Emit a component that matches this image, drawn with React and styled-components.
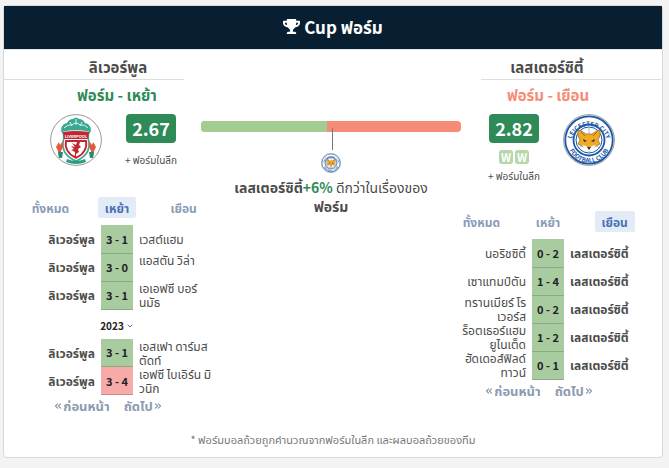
import React from 'react';
import styled, {createGlobalStyle} from 'styled-components';
import {FaTrophy} from 'react-icons/fa';
import {ChevronDown, ChevronsLeft, ChevronsRight} from 'lucide-react';

const GlobalStyle = createGlobalStyle`
  * {
    box-sizing: border-box;
  }

  body {
    margin: 0;
    background: #f3f3f3;
    color: #4c4c4c;
    font-family: 'Noto Sans CJK SC', 'Noto Sans Thai', Tahoma, Loma, sans-serif;
    font-size: 12px;
    line-height: 14px;
  }

  button {
    border: 0;
    padding: 0;
    background: none;
    color: inherit;
    font: inherit;
    cursor: pointer;
  }
`;

const Card = styled.section`
  margin: 5px 6px 12px 3px;
  background: #fff;
  border: 1px solid #d6d9d9;
  border-radius: 4px;
`;

const Header = styled.h2`
  display: flex;
  align-items: center;
  justify-content: center;
  gap: 4px;
  height: 43px;
  margin: 0;
  padding-bottom: 2px;
  background: #081e31;
  color: #fff;
  font-size: 17px;
  font-weight: 700;
`;

const Columns = styled.div`
  display: grid;
  grid-template-columns: 180px 1fr 180px;
  padding-right: 1px;
  border-top: 1px solid #e4e8ea;
`;

const Side = styled.div`
  min-width: 0;
`;

const TeamTitle = styled.h3`
  margin: 0;
  height: 30px;
  padding: ${(p) => (p.$away ? '0 48px 0 0' : '0 0 0 48px')};
  border-bottom: 1px solid #ddd;
  font-size: 15px;
  font-weight: 700;
  line-height: 34px;
  text-align: center;
`;

const SideBody = styled.div`
  width: 200px;
  margin-left: ${(p) => (p.$away ? '-33px' : '13px')};
`;

const FormTitle = styled.div`
  height: 34px;
  color: ${(p) => (p.$away ? '#f58c78' : '#2e8b57')};
  font-size: 15px;
  font-weight: 700;
  line-height: 30px;
  text-align: center;
`;

const Summary = styled.div`
  display: flex;
  flex-direction: ${(p) => (p.$away ? 'row-reverse' : 'row')};
  justify-content: center;
  gap: 22px;
  min-height: 55px;
  padding: ${(p) => (p.$away ? '0 0 0 6px' : '0 6px 0 0')};
`;

const Rating = styled.div`
  display: flex;
  flex-direction: column;
  align-items: center;
  width: 54px;
`;

const Badge = styled.strong`
  width: 50px;
  border-radius: 4px;
  background: #2e8b57;
  color: #fff;
  font-size: 18px;
  line-height: 29px;
  text-align: center;
`;

const Results = styled.div`
  display: flex;
  gap: 2px;
  margin-top: 7px;
`;

const Result = styled.span`
  width: 14px;
  border-radius: 3px;
  background: #b5d8a8;
  color: #fff;
  font-size: 11px;
  font-weight: 700;
  line-height: 14px;
  text-align: center;
`;

const LeagueForm = styled.button`
  && {
    margin-top: ${(p) => (p.$away ? '5px' : '10px')};
    font-size: 10px;
    white-space: nowrap;
  }
`;

const Tabs = styled.div`
  display: grid;
  grid-template-columns: repeat(3, 1fr);
  justify-items: center;
  margin-top: 28px;
`;

const Tab = styled.button`
  && {
    padding: 0 7px;
    border-radius: 2px;
    background: ${(p) => (p.$active ? '#e3ecf6' : 'none')};
    color: ${(p) => (p.$active ? '#4a70b5' : '#8a9bb8')};
    font-weight: 700;
    line-height: 21px;
  }
`;

const Matches = styled.table`
  width: 100%;
  table-layout: fixed;
  border-collapse: collapse;
  margin-top: ${(p) => p.$top}px;
`;

const Team = styled.td`
  height: 28px;
  padding: 0 6px;
  font-weight: ${(p) => (p.$bold ? 700 : 400)};
  text-align: ${(p) => p.$align};
  vertical-align: middle;
  white-space: pre;
`;

const ScoreCol = styled.col`
  width: 32px;
`;

const Score = styled.td`
  padding: 0;
  border-bottom: 1px solid ${(p) => (p.$lost ? '#cf8a88' : '#8bab84')};
  background: ${(p) => (p.$lost ? '#f7aaa8' : '#a8cb9f')};
  color: #222;
  font-size: 11px;
  font-weight: 700;
  text-align: center;
`;

const Season = styled.button`
  && {
    display: flex;
    align-items: center;
    gap: 2px;
    margin: 9px auto 0;
    color: #222;
    font-size: 10px;
    font-weight: 700;
  }
`;

const Pager = styled.nav`
  display: flex;
  justify-content: center;
  gap: 14px;
  margin: 3px 18px 0 0;

  button {
    display: flex;
    align-items: center;
    color: #8a9bb0;
    font-size: 13px;
    font-weight: 700;
    line-height: 16px;
  }
`;

const Middle = styled.div`
  display: flex;
  flex-direction: column;
  align-items: center;
  padding: 71px 20px 0 17px;
`;

const Bar = styled.div`
  display: flex;
  width: 100%;
  height: 11px;
  border-radius: 4px;
  overflow: hidden;
  background: #f58c78;
`;

const BarFill = styled.div`
  background: #a3cd90;
`;

const Pointer = styled.div`
  width: 1px;
  height: 22px;
  margin: -4px 0 3px 2px;
  background: #777;
`;

const Verdict = styled.p`
  margin: 5px 0 0;
  font-size: 14px;
  line-height: 19px;
  text-align: center;
  white-space: nowrap;

  em {
    color: #2e8b57;
    font-style: normal;
  }
`;

const Note = styled.p`
  margin: 0;
  padding: 18px 0 11px;
  color: #777;
  font-size: 11px;
  text-align: center;
`;

const LiverpoolCrest = () => (
  <svg width="52" height="52" viewBox="0 0 52 52" role="img" aria-label="Liverpool">
    <circle cx="26" cy="26" r="25.4" fill="#fff" stroke="#999" />
    <path d="M11 15q1-5 6-6 2-4 6-4 3-3 6 0 4 0 6 4 5 1 6 6l-2 4H13z" fill="#3aa892" />
    <path d="M14 14q4-4 8-3 4-4 8 0 5-1 8 3M20 8l2 4M32 8l-2 4M26 5v6" fill="none" stroke="#d9f1ea" />
    <path d="M12 17q14-3 28 0-3 4-1 12 1 12-13 18-14-6-13-18 2-8-1-12z" fill="#fff" stroke="#3aa892" strokeWidth="1.6" />
    <path d="M13 18q13-2 26 0l-1 7H14z" fill="#c32633" />
    <text x="26" y="23.5" fill="#fff" fontSize="4" fontWeight="700" textAnchor="middle">LIVERPOOL</text>
    <path d="M16 27h20q2 11-10 17-12-6-10-17z" fill="#fff" stroke="#c32633" strokeWidth="1.8" />
    <path d="M30 28l-1 3 2 2-3 2 1 3-3 2v2l1 1h-4l2-2v-3l-4-2 3-1-3-3 4 1-3-4 4 2 1-3z" fill="#c32633" />
    <path d="M9 28l1 3 3-4v6l-2 4v6H9l-1-6-2-4zM43 28l-1 3-3-4v6l2 4v6h2l1-6 2-4z" fill="#e3583b" />
    <path d="M8 38h5l-1 6H9zM39 38h5l-1 6h-3z" fill="#238b77" />
    <path d="M17 45q9 4 18 0l1 3q-10 4-20 0z" fill="#2b9b84" />
  </svg>
);

const LeicesterCrest = ({size, id}) => (
  <svg width={size} height={size} viewBox="0 0 52 52" role="img" aria-label="Leicester City">
    <defs>
      <path id={`${id}-top`} d="M8 30a18 18 0 1 1 36 0" />
      <path id={`${id}-bottom`} d="M4.5 27a21.5 21.5 0 0 0 43 0" />
    </defs>
    <circle cx="26" cy="26" r="25.4" fill="#fff" stroke="#999" />
    <circle cx="26" cy="26" r="23.7" fill="#fff" stroke="#1c58a5" strokeWidth="1.8" />
    <circle cx="26" cy="26" r="15.5" fill="#fff" stroke="#1c58a5" strokeWidth="1.8" />
    <circle cx="26" cy="26" r="13" fill="none" stroke="#1c58a5" />
    <path d="M16 18l20 16M36 18L16 34M26 13v26" stroke="#8caed4" strokeWidth=".8" />
    <g fill="#1c58a5" fontSize="6" fontWeight="700" textAnchor="middle">
      <text><textPath href={`#${id}-top`} startOffset="50%">LEICESTER CITY</textPath></text>
      <text><textPath href={`#${id}-bottom`} startOffset="50%">FOOTBALL CLUB</textPath></text>
    </g>
    <path d="M15 16q5 1 8 4h6q3-3 8-4 1 6-2 10l2 4-6 3-5 5-5-5-6-3 2-4q-3-4-2-10z" fill="#f0ab23" stroke="#90692d" strokeWidth=".7" />
    <path d="M19 31l4 1 3 3 3-3 4-1-3 4-4 3-4-3z" fill="#fff" />
    <path d="M20 25l4 2-3 1zM32 25l-4 2 3 1zM24 33h4l-2 3z" fill="#27364d" />
    <path d="M18 18l4 4M34 18l-4 4" fill="none" stroke="#9b681d" />
  </svg>
);

const HOME = 'ลิเวอร์พูล';
const AWAY = 'เลสเตอร์ซิตี้';

const homeRecent = [
  {home: HOME, score: '3 - 1', away: 'เวสต์แฮม'},
  {home: HOME, score: '3 - 0', away: 'แอสตัน วิล่า\n '},
  {home: HOME, score: '3 - 1', away: 'เอเอฟซี บอร์\nนมัธ'},
];

const homeOlder = [
  {home: HOME, score: '3 - 1', away: 'เอสเฟา ดาร์มส\nตัดท์'},
  {home: HOME, score: '3 - 4', away: 'เอฟซี ไบเอิร์น มิ\nวนิก', lost: true},
];

const awayMatches = [
  {home: 'นอริชซิตี้', score: '0 - 2', away: AWAY},
  {home: 'เซาแทมป์ตัน', score: '1 - 4', away: AWAY},
  {home: 'ทรานเมียร์ โร\nเวอร์ส', score: '0 - 2', away: AWAY},
  {home: 'ร็อตเธอร์แฮม\nยูไนเต็ด', score: '1 - 2', away: AWAY},
  {home: 'ฮัดเดอส์ฟิลด์\nทาวน์', score: '0 - 1', away: AWAY},
];

const MatchList = ({matches, team, top}) => (
  <Matches $top={top}>
    <colgroup>
      <col />
      <ScoreCol />
      <col />
    </colgroup>
    <tbody>
      {matches.map((m, i) => (
        <tr key={i}>
          <Team $align="right" $bold={m.home === team}>{m.home}</Team>
          <Score $lost={m.lost}>{m.score}</Score>
          <Team $align="left" $bold={m.away === team}>{m.away}</Team>
        </tr>
      ))}
    </tbody>
  </Matches>
);

const VenueTabs = ({active}) => (
  <Tabs>
    {['ทั้งหมด', 'เหย้า', 'เยือน'].map((label) => (
      <Tab key={label} type="button" $active={label === active}>
        {label}
      </Tab>
    ))}
  </Tabs>
);

const PageButtons = () => (
  <Pager>
    <button type="button">
      <ChevronsLeft size={10} strokeWidth={3} />
      ก่อนหน้า
    </button>
    <button type="button">
      ถัดไป
      <ChevronsRight size={10} strokeWidth={3} />
    </button>
  </Pager>
);

const App = () => {
  return (
    <>
      <GlobalStyle />
      <Card>
        <Header>
          <FaTrophy size={17} />
          Cup ฟอร์ม
        </Header>
        <Columns>
          <Side>
            <TeamTitle>{HOME}</TeamTitle>
            <SideBody>
              <FormTitle>ฟอร์ม - เหย้า</FormTitle>
              <Summary>
                <LiverpoolCrest />
                <Rating>
                  <Badge>2.67</Badge>
                  <LeagueForm type="button">+ ฟอร์มในลีก</LeagueForm>
                </Rating>
              </Summary>
              <VenueTabs active="เหย้า" />
              <MatchList matches={homeRecent} team={HOME} top={7} />
              <Season type="button">
                2023
                <ChevronDown size={8} strokeWidth={3} color="#4a70b5" />
              </Season>
              <MatchList matches={homeOlder} team={HOME} top={6} />
              <PageButtons />
            </SideBody>
          </Side>
          <Middle>
            <Bar>
              <BarFill style={{width: '48.5%'}} />
            </Bar>
            <Pointer />
            <LeicesterCrest size={20} id="small" />
            <Verdict>
              <strong>
                {AWAY}
                <em>+6%</em>
              </strong>{' '}
              ดีกว่าในเรื่องของ
              <br />
              <strong>ฟอร์ม</strong>
            </Verdict>
          </Middle>
          <Side>
            <TeamTitle $away>{AWAY}</TeamTitle>
            <SideBody $away>
              <FormTitle $away>ฟอร์ม - เยือน</FormTitle>
              <Summary $away>
                <LeicesterCrest size={52} id="large" />
                <Rating>
                  <Badge>2.82</Badge>
                  <Results>
                    <Result>W</Result>
                    <Result>W</Result>
                  </Results>
                  <LeagueForm type="button" $away>+ ฟอร์มในลีก</LeagueForm>
                </Rating>
              </Summary>
              <VenueTabs active="เยือน" />
              <MatchList matches={awayMatches} team={AWAY} top={7} />
              <PageButtons />
            </SideBody>
          </Side>
        </Columns>
        <Note>* ฟอร์มบอลถ้วยถูกคำนวณจากฟอร์มในลีก และผลบอลถ้วยของทีม</Note>
      </Card>
    </>
  );
};

export default App;
